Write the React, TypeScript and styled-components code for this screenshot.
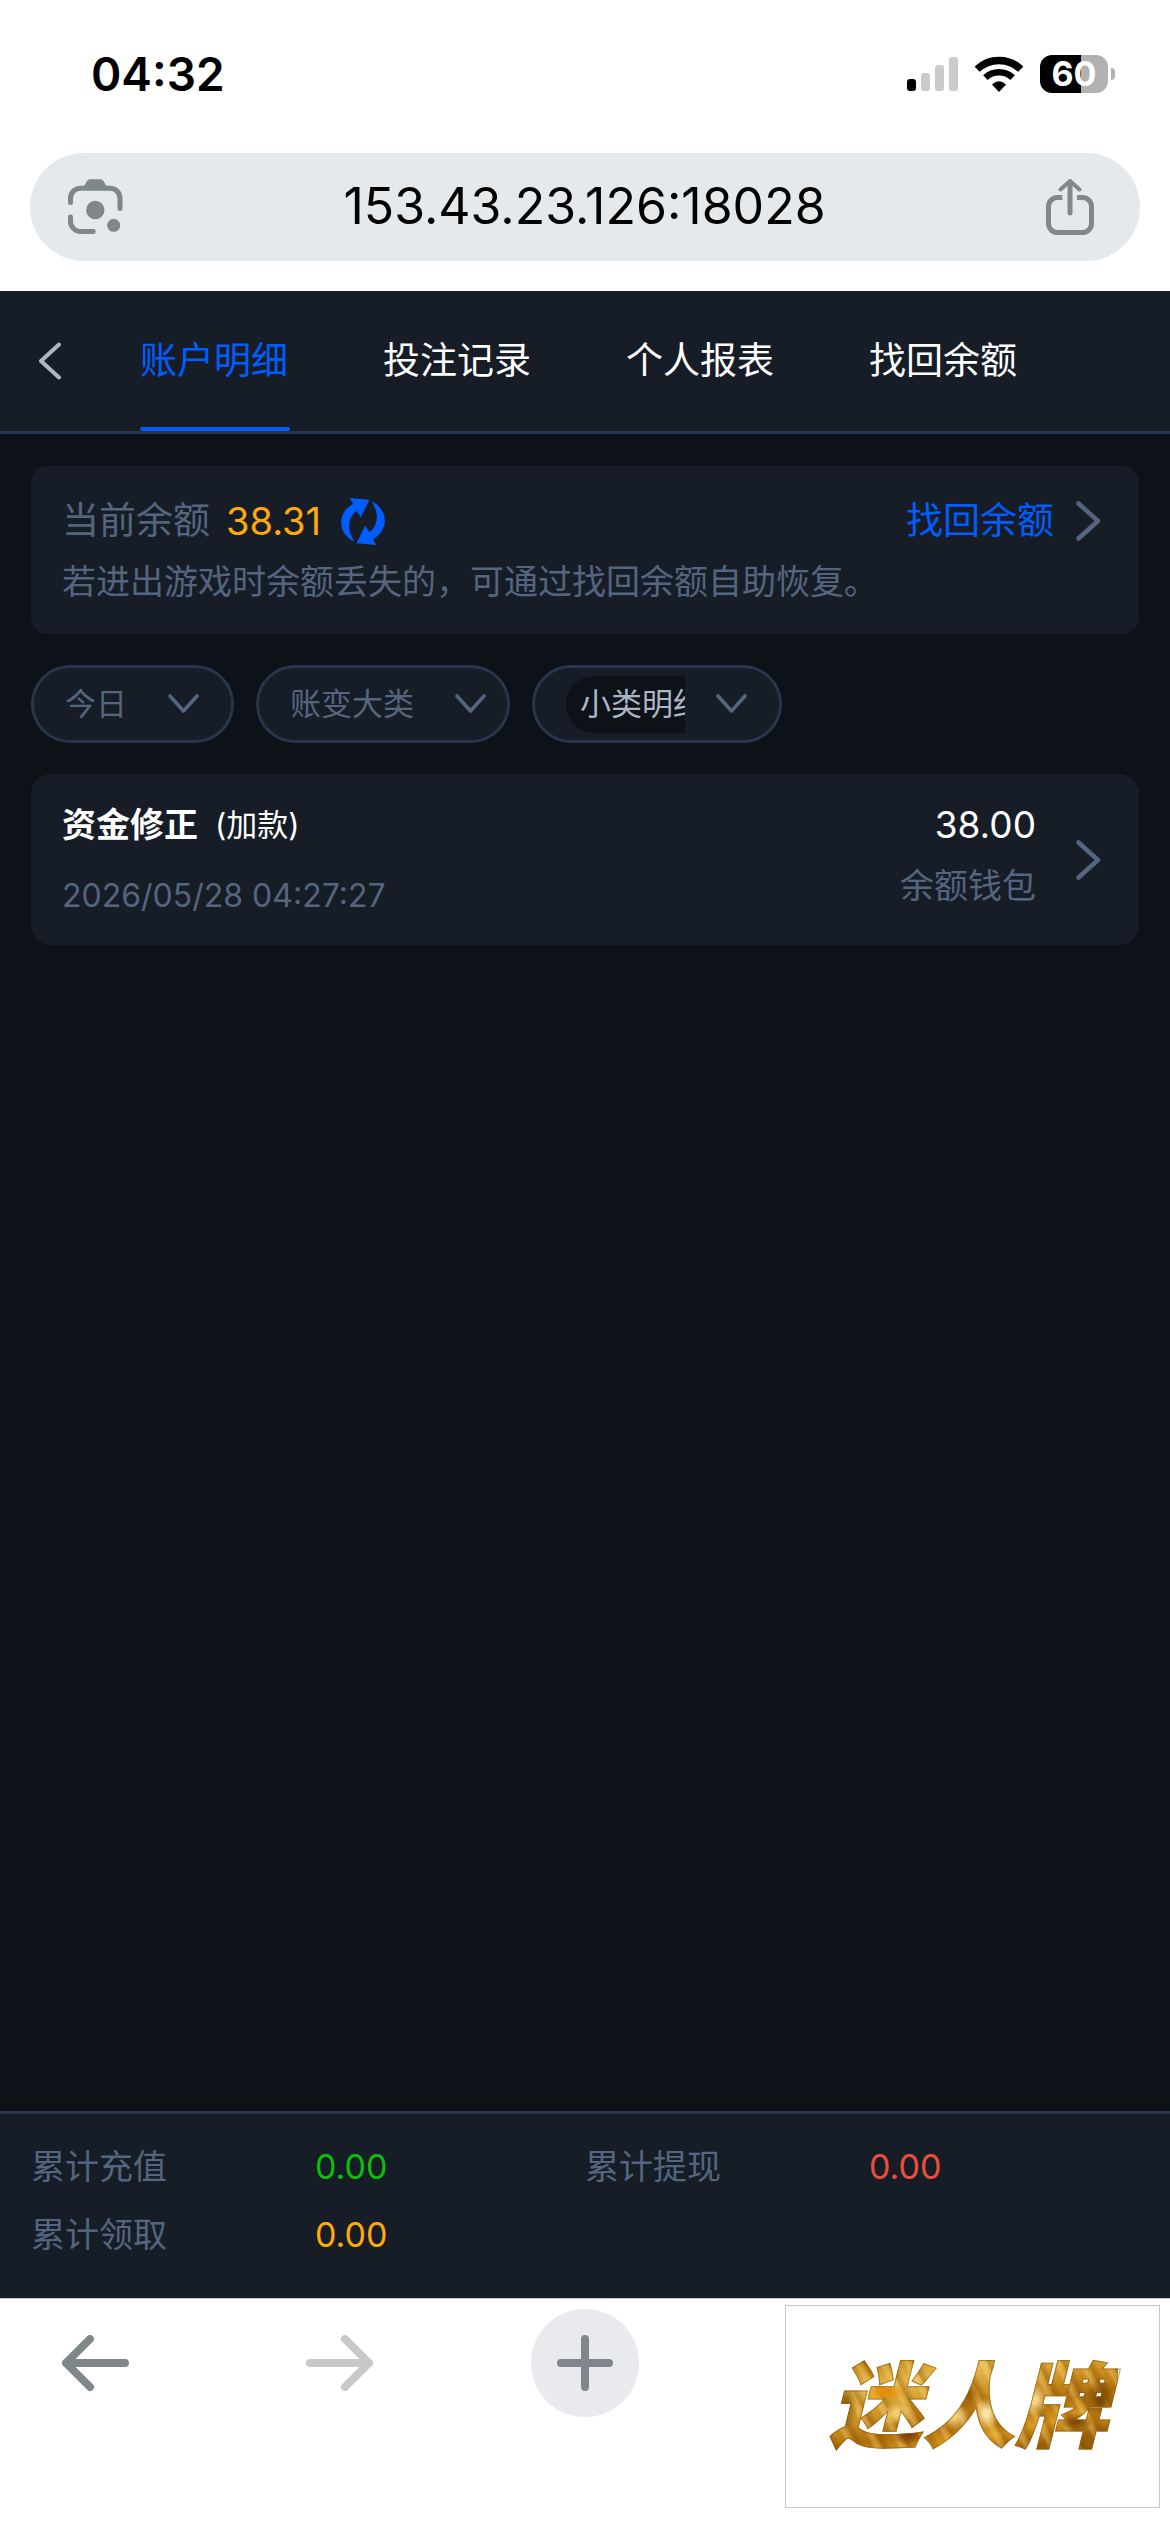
import React from "react";
import styled, { createGlobalStyle } from "styled-components";

const GlobalStyle = createGlobalStyle`
  * {
    box-sizing: border-box;
  }

  body {
    margin: 0;
    background-color: #fff;
    font-family: Inter, "Noto Sans CJK SC", sans-serif;
  }

  button,
  select {
    font-family: inherit;
    border: none;
    padding: 0;
    background: none;
    cursor: pointer;
  }

  svg {
    display: block;
    flex: none;
  }
`;

const Page = styled.div`
  min-height: 100vh;
  display: flex;
  flex-direction: column;
`;

const StatusBar = styled.div`
  height: 153px;
  padding: 0 55px 5px 91px;
  display: flex;
  align-items: center;
  justify-content: space-between;
`;

const Clock = styled.time`
  font-size: 46px;
  line-height: 56px;
  font-weight: 600;
  color: #000;
`;

const StatusIcons = styled.div`
  display: flex;
  align-items: center;
  gap: 17px;
`;

const Battery = styled.div`
  display: flex;
  align-items: center;
  gap: 3px;
`;

const BatteryBody = styled.div`
  width: 68px;
  height: 38px;
  border-radius: 12px;
  background: linear-gradient(to right, #000 60%, #b1b1b1 60%);
  color: #fff;
  font-size: 34px;
  line-height: 38px;
  font-weight: 700;
  text-align: center;
`;

const BatteryCap = styled.div`
  width: 4px;
  height: 12px;
  border-radius: 0 6px 6px 0;
  background-color: #b1b1b1;
`;

const AddressBar = styled.div`
  height: 108px;
  margin: 0 30px 30px;
  padding: 0 46px 0 38px;
  border-radius: 54px;
  background-color: #e5e9ec;
  display: flex;
  align-items: center;
  justify-content: space-between;
`;

const AddressText = styled.span`
  padding-bottom: 3px;
  font-size: 50px;
  line-height: 60px;
  color: #000;
`;

const Header = styled.header`
  height: 143px;
  padding-left: 38px;
  border-bottom: 3px solid #28354a;
  background-color: #161d27;
  display: flex;
`;

const BackButton = styled.button`
  width: 102px;
`;

const Tabs = styled.nav`
  display: flex;
  gap: 93px;
`;

const Tab = styled.a<{ $active?: boolean }>`
  width: 150px;
  height: 140px;
  padding-top: 4px;
  font-size: 37px;
  line-height: 132px;
  text-decoration: none;
  white-space: nowrap;
  color: ${(props) => (props.$active ? "#005dfe" : "#fff")};

  &::after {
    content: "";
    display: block;
    height: 4px;
    border-radius: 2px;
    background-color: ${(props) => (props.$active ? "#005dfe" : "transparent")};
  }
`;

const Content = styled.main`
  flex: 1;
  padding: 32px 31px;
  background-color: #0d1118;
`;

const BalanceCard = styled.section`
  height: 168px;
  padding: 27px 38px 0 31px;
  border-radius: 16px;
  background-color: #161d27;
  color: #55657f;
`;

const BalanceRow = styled.div`
  display: flex;
  align-items: center;
  font-size: 37px;
  line-height: 56px;
`;

const BalanceAmount = styled.span`
  margin: 0 20px 0 16px;
  font-size: 38px;
  color: #ffaa09;
`;

const RecoverLink = styled.a`
  margin-left: auto;
  display: flex;
  align-items: center;
  gap: 22px;
  color: #005dfe;
  text-decoration: none;
`;

const BalanceHint = styled.p`
  margin: 8px 0 0;
  font-size: 34px;
  line-height: 50px;
`;

const Filters = styled.div`
  display: flex;
  gap: 22px;
  margin: 31px 0;
`;

const Filter = styled.label<{ $width: number }>`
  width: ${(props) => props.$width}px;
  height: 78px;
  padding: 0 0 0 31px;
  border: 3px solid #28354a;
  border-radius: 39px;
  background-color: #161d27;
  display: flex;
  align-items: center;
  gap: 41px;
`;

const FilterSelect = styled.select<{ $inset?: boolean }>`
  appearance: none;
  flex: none;
  width: ${(props) => (props.$inset ? "119px" : "auto")};
  height: 57px;
  margin-right: ${(props) => (props.$inset ? "-10px" : "0")};
  padding-left: ${(props) => (props.$inset ? "14px" : "0")};
  padding-bottom: 2px;
  border-radius: 28px 0 0 28px;
  background-color: ${(props) => (props.$inset ? "#0d1118" : "transparent")};
  color: ${(props) => (props.$inset ? "#acb5c5" : "#55657f")};
  font-size: 31px;
  outline: none;
`;

const RecordCard = styled.article`
  height: 171px;
  padding: 0 38px 0 31px;
  border-radius: 20px;
  background-color: #161d27;
  display: flex;
  align-items: center;
`;

const RecordInfo = styled.div`
  flex: 1;
`;

const RecordTitle = styled.div`
  display: flex;
  align-items: center;
  gap: 17px;
  color: #fff;
  font-size: 34px;
  line-height: 50px;
`;

const RecordType = styled.span`
  font-size: 31px;
`;

const RecordTime = styled.time`
  display: block;
  margin-top: 22px;
  font-size: 32px;
  line-height: 48px;
  color: #55657f;
`;

const RecordAmount = styled.div`
  margin-right: 40px;
  padding-bottom: 12px;
  text-align: right;
  color: #fff;
  font-size: 37px;
  line-height: 56px;
`;

const RecordWallet = styled.div`
  margin-top: 8px;
  font-size: 34px;
  line-height: 50px;
  color: #55657f;
`;

const Summary = styled.dl`
  margin: 0;
  height: 187px;
  padding: 19px 31px 0;
  border-top: 3px solid #28354a;
  background-color: #161d27;
  display: grid;
  grid-template-columns: 1fr 1fr;
  grid-auto-rows: 68px;
  align-items: center;
  font-size: 34px;
  line-height: 50px;
`;

const SummaryItem = styled.div`
  display: flex;
`;

const SummaryLabel = styled.dt`
  width: 284px;
  color: #55657f;
`;

const SummaryValue = styled.dd<{ $color: string }>`
  margin: 0;
  color: ${(props) => props.$color};
`;

const BottomBar = styled.div`
  height: 234px;
  padding: 6px 10px 0 61px;
  border-top: 1px solid #c5c8cb;
  background-color: #fff;
  display: flex;
  justify-content: space-between;
`;

const BottomNav = styled.nav`
  display: flex;
  gap: 177px;
  padding-top: 4px;
`;

const NavButton = styled.button`
  height: 108px;
`;

const NewTabButton = styled.button`
  width: 108px;
  height: 108px;
  margin-left: -20px;
  border-radius: 50%;
  background-color: #e8eaee;
  display: flex;
  align-items: center;
  justify-content: center;
`;

const Brand = styled.div`
  width: 375px;
  height: 203px;
  padding: 0 8px 14px 0;
  border: 1px solid #c6c7c8;
  background-color: #fff;
  display: flex;
  align-items: center;
  justify-content: center;
`;

const BrandText = styled.span`
  padding: 0 10px;
  font-family: "Noto Sans CJK SC", sans-serif;
  font-size: 93px;
  line-height: 136px;
  font-weight: 900;
  font-style: italic;
  color: transparent;
  -webkit-text-stroke: 1px rgba(138, 88, 12, 0.6);
  background-image:
    radial-gradient(ellipse 22px 10px at 22% 44%, #e58e08 20%, transparent),
    radial-gradient(ellipse 16px 12px at 26% 60%, #f3cd70 20%, transparent),
    radial-gradient(ellipse 12px 18px at 50% 46%, #9a5a04 10%, transparent),
    radial-gradient(ellipse 14px 16px at 56% 60%, #fbe3a0 20%, transparent),
    radial-gradient(ellipse 18px 14px at 45% 62%, #f5d27c 15%, transparent),
    radial-gradient(ellipse 16px 22px at 94% 50%, #7d4a04 15%, transparent),
    radial-gradient(ellipse 18px 9px at 86% 66%, #7d4a04 15%, transparent),
    radial-gradient(ellipse 14px 16px at 72% 50%, #f7d888 20%, transparent),
    radial-gradient(ellipse 12px 26px at 9% 54%, #8c5a05 10%, transparent),
    radial-gradient(ellipse 16px 10px at 30% 76%, #7d4204 10%, transparent),
    repeating-linear-gradient(62deg, rgba(120, 70, 0, 0.3) 0 3px, transparent 8px 13px, rgba(255, 226, 140, 0.35) 17px, transparent 22px),
    linear-gradient(168deg, #c08510 20%, #e6bb50 34%, #cf9326 48%, #b0700c 60%, #dc9c24 70%, #9a5f08 80%);
  -webkit-background-clip: text;
  background-clip: text;
`;

const SignalIcon = () => (
  <svg width="51" height="34" viewBox="0 0 51 34">
    <rect x="0" y="22" width="9" height="12" rx="3" fill="#000" />
    <rect x="14" y="16" width="9" height="18" rx="3" fill="#cbcbcb" />
    <rect x="28" y="8" width="9" height="26" rx="3" fill="#cbcbcb" />
    <rect x="42" y="0" width="9" height="34" rx="3" fill="#cbcbcb" />
  </svg>
);

const WifiIcon = () => (
  <svg width="48" height="36" viewBox="0 0 48 36" fill="none" stroke="#000">
    <path d="M2.2 13.2A31.5 31.5 0 0 1 45.8 13.2" strokeWidth="7.4" />
    <path d="M10.4 21.6A20 20 0 0 1 37.6 21.6" strokeWidth="6.6" />
    <path d="M24 36L17 28.6Q24 22 31 28.6Z" fill="#000" stroke="none" />
  </svg>
);

const LensIcon = () => (
  <svg width="55" height="56" viewBox="0 0 55 56" fill="none">
    <path
      d="M2.5 23.5V19.2a10 10 0 0 1 10-10H42a10 10 0 0 1 10 10v10.3M2.5 38v4.5a10 10 0 0 0 10 10h12.7"
      stroke="#7f8789"
      strokeWidth="5"
      strokeLinecap="round"
    />
    <path d="M15.8 7.5L19 2Q20 .3 22 .3H32.5Q34.5 .3 35.5 2L38.6 7.5Z" fill="#7f8789" />
    <circle cx="27.3" cy="31" r="9.2" fill="#7f8789" />
    <circle cx="45.7" cy="46.3" r="6.5" fill="#7f8789" />
  </svg>
);

const ShareIcon = () => (
  <svg width="48" height="57" viewBox="0 0 48 57" fill="none" stroke="#80888c" strokeWidth="5">
    <path d="M16.3 18.5H11.5a9 9 0 0 0-9 9V44.5a9 9 0 0 0 9 9h25a9 9 0 0 0 9-9V27.5a9 9 0 0 0-9-9H31" />
    <path d="M24 3V34" strokeLinecap="round" />
    <path d="M14.5 10.5L24 2L33.5 10.5" strokeWidth="4" strokeLinecap="round" strokeLinejoin="round" />
  </svg>
);

const RefreshIcon = () => (
  <svg width="44" height="47" viewBox="0 0 44 47" fill="#005dfe">
    <path d="M8.7 0L28.6 1.7L19.8 19.3L15.6 13C8 18 4.5 31 13.7 43.7C-3.5 36 -4.5 15 12.1 5.7Z" />
    <path
      d="M8.7 0L28.6 1.7L19.8 19.3L15.6 13C8 18 4.5 31 13.7 43.7C-3.5 36 -4.5 15 12.1 5.7Z"
      transform="rotate(180 22 23.5)"
    />
  </svg>
);

const ChevronLeft = () => (
  <svg width="24" height="38" viewBox="0 0 24 38" fill="none">
    <path d="M21 2.5L3 19L21 35.5" stroke="#adb6c5" strokeWidth="4" strokeLinecap="round" strokeLinejoin="round" />
  </svg>
);

const ChevronRight = () => (
  <svg width="25" height="40" viewBox="0 0 25 40" fill="none">
    <path d="M2.5 2.5L22 20L2.5 37.5" stroke="#55657f" strokeWidth="4.5" strokeLinecap="round" strokeLinejoin="round" />
  </svg>
);

const ChevronDown = () => (
  <svg width="31" height="20" viewBox="0 0 31 20" fill="none">
    <path d="M2 2L15.5 17L29 2" stroke="#55657f" strokeWidth="3.6" strokeLinecap="round" strokeLinejoin="round" />
  </svg>
);

const ArrowIcon = ({ forward }: { forward?: boolean }) => (
  <svg width="68" height="56" viewBox="0 0 68 56" fill="none">
    <path
      d={forward ? "M4 28H63M39 4L63 28L39 52" : "M64 28H5M29 4L5 28L29 52"}
      stroke={forward ? "#c8c8c8" : "#7f8789"}
      strokeWidth="8"
      strokeLinecap="round"
      strokeLinejoin="round"
    />
  </svg>
);

const PlusIcon = () => (
  <svg width="56" height="56" viewBox="0 0 56 56">
    <path d="M28 4V52M4 28H52" stroke="#80868d" strokeWidth="8" strokeLinecap="round" />
  </svg>
);

const tabs = ["账户明细", "投注记录", "个人报表", "找回余额"];

const filters = [
  { name: "日期", value: "今日", width: 203 },
  { name: "大类", value: "账变大类", width: 254 },
  { name: "小类", value: "小类明细", width: 250, inset: true },
];

const totals = [
  { label: "累计充值", value: "0.00", color: "#0cbd0c" },
  { label: "累计提现", value: "0.00", color: "#ea4e3d" },
  { label: "累计领取", value: "0.00", color: "#ffaa09" },
];

const App = () => {
  return (
    <Page>
      <GlobalStyle />
      <StatusBar>
        <Clock>04:32</Clock>
        <StatusIcons>
          <SignalIcon />
          <WifiIcon />
          <Battery>
            <BatteryBody>60</BatteryBody>
            <BatteryCap />
          </Battery>
        </StatusIcons>
      </StatusBar>
      <AddressBar>
        <button aria-label="Lens">
          <LensIcon />
        </button>
        <AddressText>153.43.23.126:18028</AddressText>
        <button aria-label="Share">
          <ShareIcon />
        </button>
      </AddressBar>

      <Header>
        <BackButton aria-label="返回">
          <ChevronLeft />
        </BackButton>
        <Tabs>
          {tabs.map((tab, index) => (
            <Tab key={tab} href="#" $active={index === 0}>
              {tab}
            </Tab>
          ))}
        </Tabs>
      </Header>

      <Content>
        <BalanceCard>
          <BalanceRow>
            <span>当前余额</span>
            <BalanceAmount>38.31</BalanceAmount>
            <button aria-label="刷新">
              <RefreshIcon />
            </button>
            <RecoverLink href="#">
              找回余额
              <ChevronRight />
            </RecoverLink>
          </BalanceRow>
          <BalanceHint>若进出游戏时余额丢失的，可通过找回余额自助恢复。</BalanceHint>
        </BalanceCard>

        <Filters>
          {filters.map((filter) => (
            <Filter key={filter.name} $width={filter.width}>
              <FilterSelect aria-label={filter.name} $inset={filter.inset}>
                <option>{filter.value}</option>
              </FilterSelect>
              <ChevronDown />
            </Filter>
          ))}
        </Filters>

        <RecordCard>
          <RecordInfo>
            <RecordTitle>
              <strong>资金修正</strong>
              <RecordType>(加款)</RecordType>
            </RecordTitle>
            <RecordTime>2026/05/28 04:27:27</RecordTime>
          </RecordInfo>
          <RecordAmount>
            38.00
            <RecordWallet>余额钱包</RecordWallet>
          </RecordAmount>
          <ChevronRight />
        </RecordCard>
      </Content>

      <Summary>
        {totals.map((item) => (
          <SummaryItem key={item.label}>
            <SummaryLabel>{item.label}</SummaryLabel>
            <SummaryValue $color={item.color}>{item.value}</SummaryValue>
          </SummaryItem>
        ))}
      </Summary>

      <BottomBar>
        <BottomNav>
          <NavButton aria-label="Back">
            <ArrowIcon />
          </NavButton>
          <NavButton aria-label="Forward">
            <ArrowIcon forward />
          </NavButton>
          <NewTabButton aria-label="New tab">
            <PlusIcon />
          </NewTabButton>
        </BottomNav>
        <Brand>
          <BrandText>迷人牌</BrandText>
        </Brand>
      </BottomBar>
    </Page>
  );
};

export default App;
